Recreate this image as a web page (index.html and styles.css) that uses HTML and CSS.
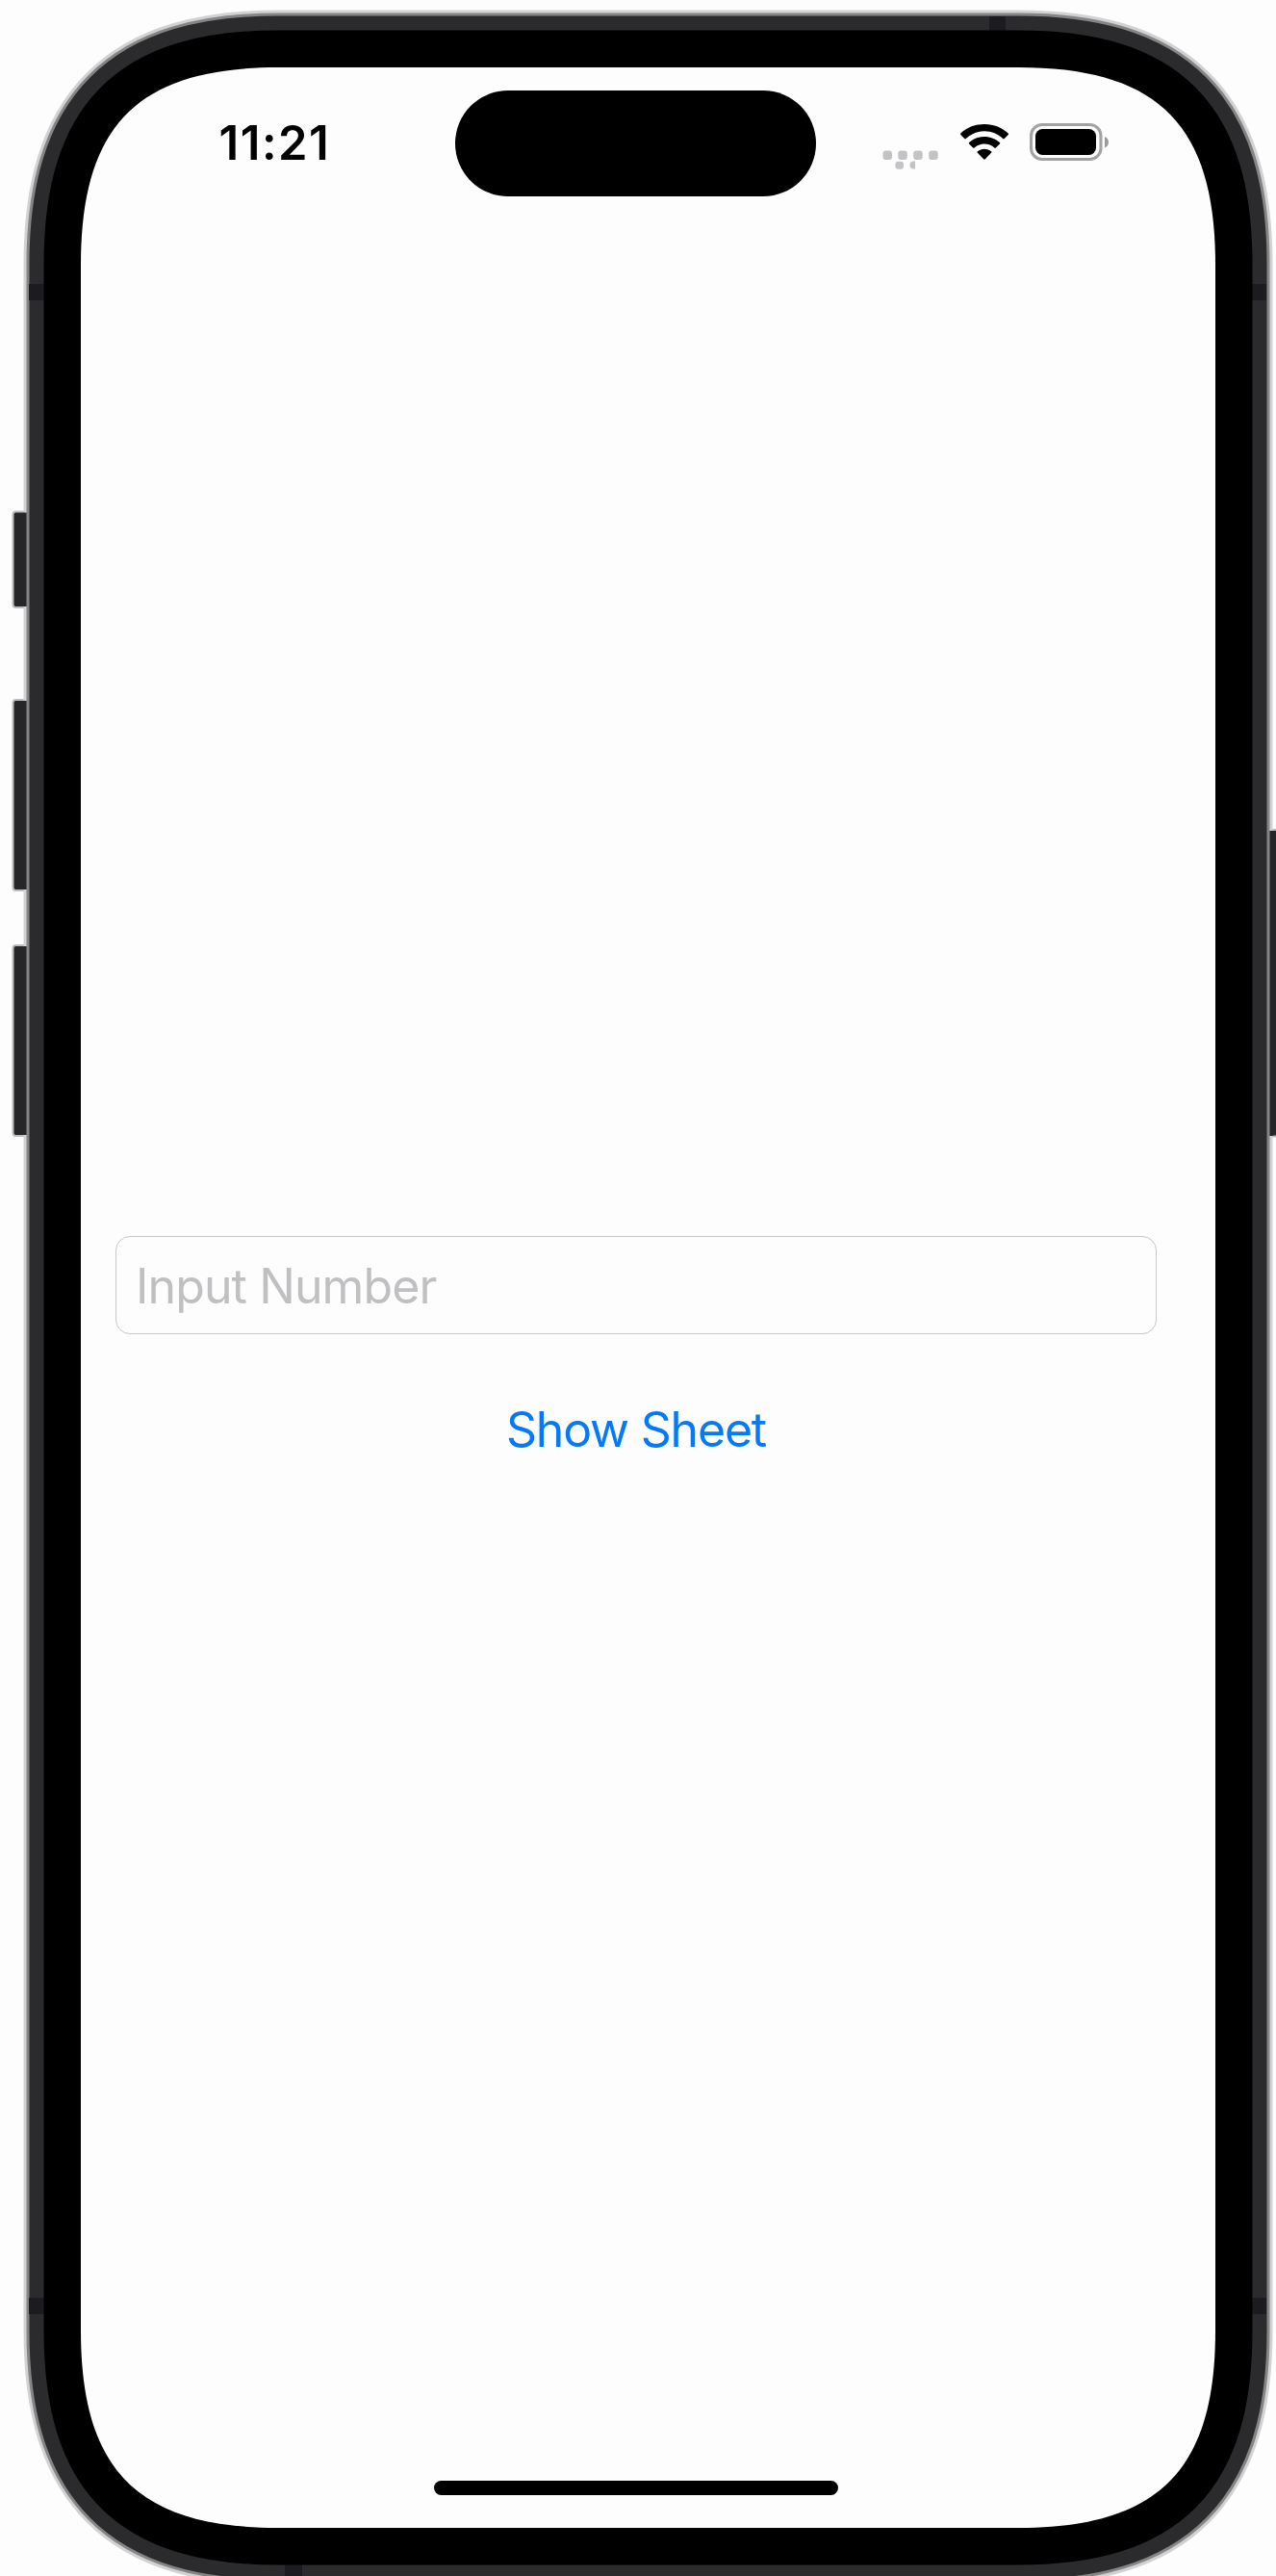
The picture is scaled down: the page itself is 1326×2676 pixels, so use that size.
FILE: index.html
```
<!DOCTYPE html>
<html lang="en">
<head>
<meta charset="utf-8">
<title>Input Number</title>
<link rel="stylesheet" href="styles.css">
</head>
<body>
<div class="phone">
  <svg class="frame" viewBox="0 0 1326 2676" aria-hidden="true">
    <defs>
      <path id="outline" d="M289 70 H1058 C1203.5 70 1263 129.5 1263 275 V2421 C1263 2566.5 1203.5 2626 1058 2626 H289 C143.5 2626 84 2566.5 84 2421 V275 C84 129.5 143.5 70 289 70 Z"/>
    </defs>
    <g class="side-buttons">
      <rect x="13.500" y="531.500" width="20" height="99.500" rx="3"/>
      <rect x="13.500" y="727" width="20" height="198" rx="3"/>
      <rect x="13.500" y="982" width="20" height="198" rx="3"/>
      <rect x="1310" y="862" width="30" height="318.500" rx="3"/>
    </g>
    <use href="#outline" class="rim-light"/>
    <path class="side-caps" d="M24 532.500h4v97.500h-4zM24 728h4v196h-4zM24 983h4v196h-4zM1319 863h4v317h-4z"/>
    <use href="#outline" class="rim-grey"/>
    <use href="#outline" class="rim-dark"/>
    <path class="bands" d="M30 295h17v17H30zM1300 295h16v17h-16zM30 2387h17v17H30zM1300 2387h16v17h-16zM1028 17h17v16h-17zM296 2664h18v12h-18z"/>
    <use href="#outline" class="bezel"/>
    <use href="#outline" class="display"/>
  </svg>

  <main class="screen">
    <header class="status">
      <div class="time">11:21</div>
      <div class="island"></div>
      <div class="indicators">
        <svg class="signal" viewBox="0 0 60 22" aria-hidden="true">
          <rect x="0.500" y="0.500" width="9.500" height="9.500" rx="3"/>
          <rect x="16.300" y="0.500" width="9.500" height="9.500" rx="3"/>
          <rect x="32.200" y="0.500" width="9.500" height="9.500" rx="3"/>
          <rect x="48.200" y="0.500" width="9.500" height="9.500" rx="3"/>
          <rect x="13.500" y="11.700" width="8.500" height="8" rx="3"/>
          <path d="M34 11.500v8h-1.500a4 4 0 0 1 0-8z"/>
        </svg>
        <svg class="wifi" viewBox="0 0 50 37" aria-hidden="true">
          <path d="M25 0C15 0 6.300 3.800 0.300 9.600Q-.3 10.300.3 11l4 4.100q.8.600 1.500 0C10.800 10.300 17.500 7.300 25 7.300s14.200 3 19.200 7.800q.7.600 1.500 0l4-4.100q.6-.7 0-1.400C43.700 3.800 35 0 25 0z"/>
          <path d="M25 12.900c-6.200 0-11.700 2.300-15.900 6.100q-.7.700 0 1.400l4 4.100q.7.600 1.500 0c2.800-2.500 6.400-4 10.400-4s7.600 1.500 10.400 4q.8.600 1.500 0l4-4.100q.7-.7 0-1.400C36.700 15.200 31.200 12.900 25 12.900z"/>
          <path d="M25 25.700c-2.700 0-5.200 1-7.100 2.600q-.8.700 0 1.500l6.300 6.500q.8.700 1.600 0l6.300-6.500q.8-.8 0-1.500C30.200 26.700 27.700 25.700 25 25.700z"/>
        </svg>
        <svg class="battery" viewBox="0 0 82 39" aria-hidden="true">
          <rect class="battery-shell" x="1.500" y="1.500" width="72.500" height="36" rx="11.500"/>
          <rect x="6" y="6" width="63" height="27" rx="7.500"/>
          <path class="battery-tip" d="M78 14q4 1.800 4 5.700T78 25.500z"/>
        </svg>
      </div>
    </header>

    <section class="form">
      <input class="field" type="text" placeholder="Input Number" aria-label="Input Number">
      <button class="show" type="button">Show Sheet</button>
    </section>

    <div class="home"></div>
  </main>
</div>
</body>
</html>
```
FILE: styles.css
```
* { box-sizing: border-box; }

body {
  margin: 0;
  background: #fdfdfe;
  font-family: Inter, "Liberation Sans", sans-serif;
}

.phone {
  position: relative;
  width: 1326px;
  height: 2676px;
  overflow: hidden;
  padding: 70px 63px 50px 84px;
}

/* Device body, drawn behind the screen content */
.frame {
  position: absolute;
  inset: 0;
  width: 1326px;
  height: 2676px;
}

.side-buttons { fill: #262628; stroke: #bcbcc0; stroke-width: 2; }
.side-caps { fill: #262628; }
.rim-light { fill: none; stroke: #d2d2d3; stroke-width: 119; }
.rim-grey { fill: none; stroke: #858586; stroke-width: 113; }
.rim-dark { fill: none; stroke: #2b2b2d; stroke-width: 107; }
.bands { fill: #1b1b20; }
.bezel { fill: none; stroke: #000; stroke-width: 77; }
.display { fill: #fdfdfe; }

.screen {
  position: relative;
  display: flex;
  flex-direction: column;
  height: 2556px;
  padding-right: 25px;
}

.status {
  display: grid;
  grid-template-columns: 389px 375px 1fr;
  height: 134px;
  padding-top: 23.500px;
}

.time {
  padding-left: 143.500px;
  padding-top: 25px;
  font-size: 49px;
  font-weight: 600;
  line-height: 60px;
  letter-spacing: 1.500px;
}

.island {
  height: 110.500px;
  border-radius: 56px;
  background: #000;
}

.indicators {
  display: flex;
  align-items: flex-start;
  padding: 34px 0 0 69px;
}

.signal { width: 60px; height: 22px; margin-top: 28px; fill: #c3c3c5; }
.wifi { width: 50px; height: 37px; margin: 1.500px 0 0 21px; }
.battery { width: 82px; height: 39px; margin-left: 22px; }
.battery-shell { fill: none; stroke: #a2a2a3; stroke-width: 3; }
.battery-tip { fill: #9b9b9c; }

.form {
  display: flex;
  flex-direction: column;
  align-items: center;
  padding-top: 1080px;
}

.field {
  width: 1082px;
  height: 102px;
  padding: 2px 20px 0;
  border: 1px solid #c8c8ca;
  border-radius: 15px;
  background: transparent;
  font: 400 50px/60px Inter, "Liberation Sans", sans-serif;
  letter-spacing: -0.900px;
  outline: 0;
}

.field::placeholder { color: #c0c0c2; opacity: 1; }

.show {
  margin-top: 69px;
  padding: 0;
  border: 0;
  background: none;
  color: #067af6;
  font: 400 50px/60px Inter, "Liberation Sans", sans-serif;
  letter-spacing: -1.200px;
}

.home {
  width: 420px;
  height: 15px;
  margin: auto auto 34px;
  border-radius: 8px;
  background: #000;
}
```
